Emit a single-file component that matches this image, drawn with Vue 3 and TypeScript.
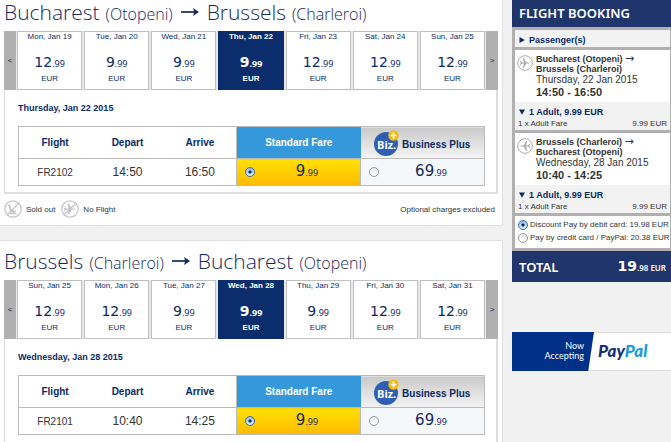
<script setup lang="ts">
import { ref } from 'vue'

interface Day {
  label: string
  whole: string
  cents: string
}

interface Route {
  id: string
  fromCity: string
  fromAirport: string
  toCity: string
  toAirport: string
  days: Day[]
  selectedDay: number
  dateTitle: string
  flight: string
  depart: string
  arrive: string
  fare: string
}

interface Leg {
  from: string
  to: string
  date: string
  time: string
  inbound: boolean
}

const day = (label: string, whole: string): Day => ({ label, whole, cents: '.99' })

const routes = ref<Route[]>([
  {
    id: 'out',
    fromCity: 'Bucharest',
    fromAirport: '(Otopeni)',
    toCity: 'Brussels',
    toAirport: '(Charleroi)',
    days: [
      day('Mon, Jan 19', '12'),
      day('Tue, Jan 20', '9'),
      day('Wed, Jan 21', '9'),
      day('Thu, Jan 22', '9'),
      day('Fri, Jan 23', '12'),
      day('Sat, Jan 24', '12'),
      day('Sun, Jan 25', '12'),
    ],
    selectedDay: 3,
    dateTitle: 'Thursday, Jan 22 2015',
    flight: 'FR2102',
    depart: '14:50',
    arrive: '16:50',
    fare: 'standard',
  },
  {
    id: 'back',
    fromCity: 'Brussels',
    fromAirport: '(Charleroi)',
    toCity: 'Bucharest',
    toAirport: '(Otopeni)',
    days: [
      day('Sun, Jan 25', '12'),
      day('Mon, Jan 26', '12'),
      day('Tue, Jan 27', '9'),
      day('Wed, Jan 28', '9'),
      day('Thu, Jan 29', '9'),
      day('Fri, Jan 30', '12'),
      day('Sat, Jan 31', '12'),
    ],
    selectedDay: 3,
    dateTitle: 'Wednesday, Jan 28 2015',
    flight: 'FR2101',
    depart: '10:40',
    arrive: '14:25',
    fare: 'standard',
  },
])

const legs: Leg[] = [
  {
    from: 'Bucharest (Otopeni)',
    to: 'Brussels (Charleroi)',
    date: 'Thursday, 22 Jan 2015',
    time: '14:50 - 16:50',
    inbound: false,
  },
  {
    from: 'Brussels (Charleroi)',
    to: 'Bucharest (Otopeni)',
    date: 'Wednesday, 28 Jan 2015',
    time: '10:40 - 14:25',
    inbound: true,
  },
]

const payment = ref('debit')
</script>

<template>
  <div class="page">
    <main class="results">
      <section v-for="route in routes" :key="route.id" class="panel">
        <h1 class="route">
          <span>{{ route.fromCity }}</span>
          <small>{{ route.fromAirport }}</small>
          <svg class="route-arrow" viewBox="0 0 18 10" aria-hidden="true">
            <path d="M0 5H15" stroke="#14285c" stroke-width="1.7" />
            <path d="M12 1L18 5L12 9L13.2 5Z" fill="#14285c" />
          </svg>
          <span>{{ route.toCity }}</span>
          <small>{{ route.toAirport }}</small>
        </h1>

        <div class="box">
          <div class="strip">
            <button class="step" type="button">&lt;</button>
            <div class="days">
              <button
                v-for="(item, index) in route.days"
                :key="item.label"
                type="button"
                class="day"
                :class="{ selected: index === route.selectedDay }"
                @click="route.selectedDay = index"
              >
                <span class="day-label">{{ item.label }}</span>
                <span class="price">{{ item.whole }}<span class="cents">{{ item.cents }}</span></span>
                <span class="currency">EUR</span>
              </button>
            </div>
            <button class="step" type="button">&gt;</button>
          </div>

          <h2 class="date-title">{{ route.dateTitle }}</h2>

          <table class="flights">
            <colgroup>
              <col class="col-time" />
              <col class="col-time" />
              <col class="col-time" />
              <col class="col-fare" />
              <col class="col-fare" />
            </colgroup>
            <thead>
              <tr>
                <th>Flight</th>
                <th>Depart</th>
                <th>Arrive</th>
                <th class="standard-head">Standard Fare</th>
                <th class="business-head">
                  <div class="business-title">
                    <svg class="biz" viewBox="0 0 26 26" aria-hidden="true">
                      <circle cx="12" cy="14" r="12" fill="#2f5fb3" />
                      <text x="3" y="19" class="biz-text">Biz.</text>
                      <circle cx="19.5" cy="5.5" r="5.2" fill="#f6b912" />
                      <path d="M19.5 2.6V8.4M16.6 5.5H22.4" stroke="#fff" stroke-width="1.7" />
                    </svg>
                    <span>Business Plus</span>
                  </div>
                </th>
              </tr>
            </thead>
            <tbody>
              <tr>
                <td class="number">{{ route.flight }}</td>
                <td>{{ route.depart }}</td>
                <td>{{ route.arrive }}</td>
                <td class="standard">
                  <label class="fare">
                    <input v-model="route.fare" type="radio" :name="'fare-' + route.id" value="standard" />
                    <span class="price">9<span class="cents">.99</span></span>
                  </label>
                </td>
                <td class="business">
                  <label class="fare">
                    <input v-model="route.fare" type="radio" :name="'fare-' + route.id" value="business" />
                    <span class="price">69<span class="cents">.99</span></span>
                  </label>
                </td>
              </tr>
            </tbody>
          </table>
        </div>

        <div v-if="route.id === 'out'" class="legend">
          <svg class="legend-icon" viewBox="0 0 18 18" fill="none" stroke="#c4c4c8" aria-hidden="true">
            <circle cx="9" cy="9" r="8.2" stroke-width="1.2" />
            <path d="M5 4.5L7 11.2H11.5" stroke-width="2" />
            <path d="M6 13.5H12.5M9.5 11V13.5" stroke-width="1.4" />
            <path d="M15 3L3 15" stroke-width="1.2" />
          </svg>
          <span>Sold out</span>
          <svg class="legend-icon second" viewBox="0 0 18 18" aria-hidden="true">
            <circle cx="9" cy="9" r="8.2" fill="none" stroke="#c4c4c8" stroke-width="1.2" />
            <path
              d="M3 8L4 8L5.2 8.4H7.6L6.6 3.5H8L10.6 8.4H13.5Q15.2 9 13.5 9.7H10.6L8 14.5H6.6L7.6 9.7H5.2L4 11H3L3.5 9Z"
              fill="#c4c4c8"
            />
            <path d="M15 3L3 15" stroke="#c4c4c8" stroke-width="1.2" />
          </svg>
          <span>No Flight</span>
          <span class="optional">Optional charges excluded</span>
        </div>
      </section>
    </main>

    <aside class="sidebar">
      <div class="booking">
        <h2 class="booking-title">FLIGHT BOOKING</h2>
        <div class="booking-body">
          <button class="passengers" type="button">
            <svg class="marker" viewBox="0 0 6 6" aria-hidden="true">
              <path d="M0.5 0L5.8 3L0.5 6Z" fill="#0a2a66" />
            </svg>
            Passenger(s)
          </button>

          <section v-for="leg in legs" :key="leg.date" class="leg">
            <div class="leg-info">
              <svg class="plane" :class="{ inbound: leg.inbound }" viewBox="0 0 16 16" aria-hidden="true">
                <circle cx="8" cy="8" r="7.3" fill="#fff" stroke="#aaa" />
                <path
                  d="M3 6L3.8 6L5 7.5H7L5.8 3H6.8L9.4 7.5H12Q13.8 8 12 8.5H9.4L6.8 13H5.8L7 8.5H5L3.8 10H3L3.6 8Z"
                  fill="#aaa"
                />
              </svg>
              <div>
                <div class="leg-city">{{ leg.from }} <span class="to">→</span></div>
                <div class="leg-city">{{ leg.to }}</div>
                <div class="leg-date">{{ leg.date }}</div>
                <div class="leg-time">{{ leg.time }}</div>
              </div>
            </div>
            <div class="leg-fare">
              <button class="fare-toggle" type="button">
                <svg class="marker" viewBox="0 0 6 6" aria-hidden="true">
                  <path d="M0 0.5H6L3 5.8Z" fill="#0a2a66" />
                </svg>
                1 Adult, 9.99 EUR
              </button>
              <div class="fare-line">
                <span>1 x Adult Fare</span>
                <span>9.99 EUR</span>
              </div>
            </div>
          </section>

          <div class="payment">
            <label>
              <input v-model="payment" type="radio" name="payment" value="debit" />
              <span>Discount Pay by debit card: 19.98 EUR</span>
            </label>
            <label>
              <input v-model="payment" type="radio" name="payment" value="credit" />
              <span>Pay by credit card / PayPal: 20.38 EUR</span>
            </label>
          </div>
        </div>
        <div class="total">
          <span class="total-label">TOTAL</span>
          <span class="total-value">19<small>.98 EUR</small></span>
        </div>
      </div>

      <div class="paypal">
        <div class="paypal-now">Now<br />Accepting</div>
        <div class="paypal-logo"><span>Pay</span><span class="pal">Pal</span></div>
      </div>
    </aside>
  </div>
</template>

<style>
body {
  background: #f1f1f1;
}
</style>

<style scoped>
* {
  box-sizing: border-box;
}

.page {
  display: grid;
  grid-template-columns: minmax(0, 503fr) minmax(0, 159fr);
  gap: 9px;
  min-height: 100vh;
  color: #333;
  font-family: "Liberation Sans", Arial, sans-serif;
  font-size: 8px;
}

h1,
h2 {
  margin: 0;
}

button {
  margin: 0;
  padding: 0;
  border: 0;
  background: none;
  color: inherit;
  font: inherit;
  cursor: pointer;
}

input[type="radio"] {
  appearance: none;
  flex: none;
  width: 10px;
  height: 10px;
  margin: 0;
  border: 1px solid #999;
  border-radius: 50%;
  background: linear-gradient(#e8e8e8, #fff);
}

input[type="radio"]:checked {
  border-color: #47699c;
  background: radial-gradient(circle, #0b1f4d 0 1px, transparent 2px), linear-gradient(#8fbdf0, #d8f0ff);
}

.results {
  display: flex;
  flex-direction: column;
  gap: 14px;
}

.panel {
  padding: 0 4px 7px;
  border: 1px solid #e0e0e0;
  border-width: 0 1px 1px 0;
  background: #fff;
}

.panel + .panel {
  display: flex;
  flex: 1;
  flex-direction: column;
  padding-top: 8px;
  padding-bottom: 0;
  border-width: 1px 1px 0 0;
}

.panel + .panel .box {
  flex: 1;
  border-bottom: 0;
}

.route {
  display: flex;
  align-items: baseline;
  height: 31px;
  color: #17295c;
  font-family: "Open Sans", "Noto Sans", sans-serif;
  font-size: 21px;
  font-weight: 300;
  line-height: 25px;
}

.route small {
  margin-left: 6px;
  font-size: 16px;
}

.route-arrow {
  align-self: flex-start;
  width: 18px;
  height: 10px;
  margin: 7px 8px 0;
}

.box {
  padding-bottom: 6px;
  border: solid #dedede;
  border-width: 0 2px 2px 1px;
}

.strip {
  display: grid;
  grid-template-columns: 12px minmax(0, 1fr) 12px;
  gap: 1px;
  height: 59px;
  margin: 0 -2px 0 -1px;
  background: #e8e8e8;
}

.step {
  background: #b0b0b0;
  color: #0a2a66;
}

.days {
  display: grid;
  grid-template-columns: repeat(7, minmax(0, 1fr));
  gap: 2px;
}

.day {
  display: flex;
  flex-direction: column;
  align-items: center;
  border: 1px solid #c0c0c0;
  background: #fff;
  color: #0a2a66;
}

.day-label {
  line-height: 10px;
}

.price {
  font-family: "DejaVu Sans", Verdana, sans-serif;
  font-size: 14px;
  line-height: 20px;
}

.cents {
  font-family: "Noto Sans", "Open Sans", sans-serif;
  font-size: 9px;
}

.day .price {
  margin-top: 10px;
}

.currency {
  line-height: 10px;
}

.selected {
  border-color: #0c2d6b;
  background: #0c2d6b;
  color: #fff;
  font-weight: 700;
}

.date-title {
  padding: 12px 13px;
  color: #0a2a66;
  font-size: 9px;
  line-height: 12px;
}

.flights {
  width: calc(100% - 24px);
  margin-left: 13px;
  border-collapse: collapse;
  table-layout: fixed;
}

.col-fare {
  width: 124px;
}

.flights th,
.flights td {
  padding: 0;
  text-align: center;
  border: 1px solid #bbb;
  border-width: 1px 0;
}

.flights th {
  height: 32px;
  color: #0a2a66;
  font-size: 10px;
}

.flights td {
  height: 27px;
  font-size: 12px;
}

.flights tr > :first-child {
  border-left-width: 1px;
}

.flights tr > :last-child {
  border-right-width: 1px;
}

.flights .number {
  font-size: 10px;
}

.flights .standard-head {
  border-left-width: 1px;
  background: #3498db;
  color: #fff;
}

.flights .business-head {
  background: linear-gradient(#c9c9c9, #f4f4f4);
}

.flights .standard {
  border-left-width: 1px;
  background: linear-gradient(#ffe000, #ffbb00);
}

.flights .business {
  border-left-width: 1px;
  background: #f5f8fa;
}

.business-title {
  display: flex;
  align-items: center;
  justify-content: center;
  gap: 2px;
}

.business-title span {
  padding-top: 4px;
}

.biz {
  width: 26px;
  height: 26px;
}

.biz-text {
  fill: #fff;
  font-family: "Open Sans", sans-serif;
  font-size: 11px;
  font-weight: 700;
}

.fare {
  display: grid;
  grid-template-columns: 10px 1fr;
  align-items: center;
  padding: 0 1px 0 8px;
  color: #14285c;
}

.fare .price {
  font-size: 15px;
}

.legend {
  display: flex;
  align-items: center;
  gap: 4px;
  padding: 6px 3px 0 0;
}

.legend-icon {
  width: 18px;
  height: 18px;
}

.second {
  margin-left: 2px;
}

.optional {
  margin-left: auto;
}

.booking {
  background: #b0b0b0;
}

.booking-title {
  padding-left: 7px;
  background: #20356b;
  color: #fff;
  font-family: "Noto Sans", "Open Sans", sans-serif;
  font-size: 13px;
  font-weight: 600;
  line-height: 27px;
}

.booking-body {
  display: flex;
  flex-direction: column;
  gap: 3px;
  padding: 3px 1px 3px 3px;
}

.passengers,
.fare-toggle {
  display: flex;
  align-items: center;
  gap: 4px;
  padding-left: 4px;
  color: #0a2a66;
  font-size: 9px;
  font-weight: 700;
}

.passengers {
  padding-top: 3px;
  background: #f2f2f2;
  line-height: 14px;
}

.marker {
  width: 6px;
  height: 6px;
}

.leg-info {
  display: flex;
  gap: 3px;
  padding: 4px 0 4px 2px;
  background: #fff;
}

.plane {
  width: 16px;
  height: 16px;
  margin-top: 1px;
}

.inbound {
  transform: rotate(180deg);
}

.leg-city {
  height: 10px;
  font-size: 9px;
  font-weight: 700;
  line-height: 10px;
}

.to {
  font-family: "DejaVu Sans", sans-serif;
  font-size: 11px;
  font-weight: 400;
}

.leg-date {
  font-size: 10px;
  line-height: 12px;
}

.leg-time {
  font-size: 11px;
  font-weight: 700;
  line-height: 12px;
}

.leg-fare {
  padding: 4px 3px 1px 0;
  background: #f2f2f2;
}

.fare-toggle {
  line-height: 12px;
}

.fare-line {
  display: flex;
  justify-content: space-between;
  padding-left: 3px;
  line-height: 11px;
}

.payment {
  display: flex;
  flex-direction: column;
  gap: 3px;
  padding: 4px 0 5px 3px;
  background: #fff;
}

.payment label {
  display: flex;
  align-items: center;
  gap: 2px;
  line-height: 10px;
  white-space: nowrap;
}

.total {
  display: flex;
  align-items: center;
  justify-content: space-between;
  height: 31px;
  padding: 0 5px 0 7px;
  background: #20356b;
  color: #fff;
  font-family: "Noto Sans", "Open Sans", sans-serif;
  font-weight: 600;
  line-height: 20px;
}

.total-label {
  font-size: 13px;
}

.total-value {
  font-family: "DejaVu Sans", Verdana, sans-serif;
  font-size: 14px;
}

.total-value small {
  font-family: "Noto Sans", "Open Sans", sans-serif;
  font-size: 8px;
}

.paypal {
  display: flex;
  height: 39px;
  margin-top: 50px;
  border: solid #ddd;
  border-width: 1px 0;
  background: #fff;
}

.paypal-now {
  width: 82px;
  margin: -1px 0;
  padding: 9px 10px 0 0;
  background: #003087;
  clip-path: polygon(0 0, 100% 0, 93% 100%, 0 100%);
  color: #fff;
  font-family: Lato, sans-serif;
  font-size: 9px;
  line-height: 10px;
  text-align: right;
}

.paypal-logo {
  padding-left: 4px;
  color: #14307c;
  font-family: Lato, sans-serif;
  font-size: 17px;
  font-style: italic;
  font-weight: 900;
  line-height: 36px;
}

.pal {
  color: #1a9cde;
}
</style>
